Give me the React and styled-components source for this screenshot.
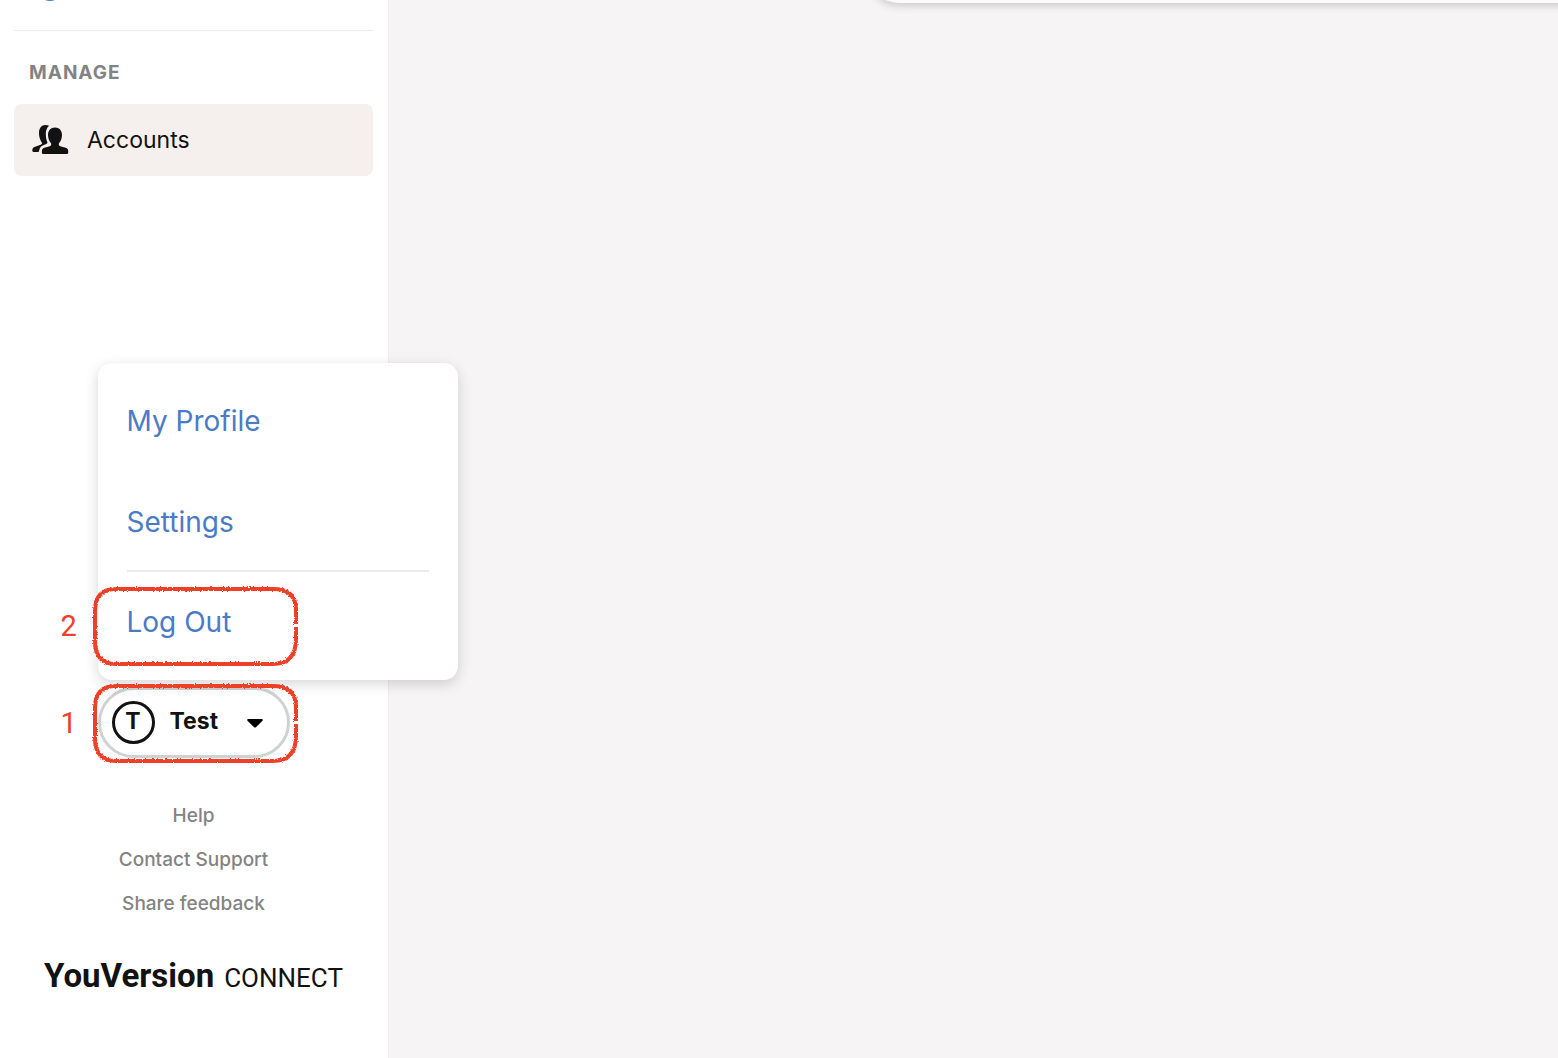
import styled, { createGlobalStyle } from 'styled-components';

import React from 'react';

const GlobalStyle = createGlobalStyle`
    * {
        box-sizing: border-box;
    }
    body {
        margin: 0;
        background-color: #f6f4f5;
        color: #121212;
        font-family: Inter, "Liberation Sans", sans-serif;
    }
`;
const Page = styled.div`
    display: flex;
    min-height: 100vh;
    overflow: hidden;
`;
const Sidebar = styled.aside`
    display: flex;
    flex-flow: column;
    flex: none;
    width: 389px;
    padding: 0 15px 59px 14px;
    border-right: solid 1px #edebec;
    background-color: #ffffff;
`;
const PreviousItem = styled.div`
    height: 72px;
    margin-top: -41px;
    padding: 19px 24px;
    border-bottom: solid 1px #edebeb;
`;
const SectionTitle = styled.h2`
    margin: 30px 15px 19px;
    color: #838383;
    font-size: 19px;
    font-weight: 700;
    line-height: 24px;
    letter-spacing: 1px;
    text-transform: uppercase;
`;
const NavLink = styled.a`
    display: flex;
    align-items: center;
    gap: 18px;
    height: 72px;
    padding: 0 18px;
    border-radius: 8px;
    background-color: #f5efed;
    color: #121212;
    font-size: 23px;
    text-decoration: none;
`;
const Bottom = styled.div`
    display: flex;
    flex-flow: column;
    align-items: center;
    margin-top: auto;
`;
const Account = styled.div`
    position: relative;
`;
const AccountButton = styled.button`
    display: flex;
    align-items: center;
    cursor: pointer;
    width: 192px;
    height: 71px;
    padding: 0 24px 0 11px;
    border: solid 3px #d0d2d1;
    border-radius: 36px;
    background-color: #ffffff;
    color: #121212;
    font: 700 23px/28px Inter, sans-serif;
`;
const Avatar = styled.span`
    width: 43px;
    height: 43px;
    margin-right: 15px;
    border: solid 3px #121212;
    border-radius: 50%;
    line-height: 34px;
    text-align: center;
`;
const UserName = styled.span`
    flex: 1;
    padding-bottom: 4px;
    text-align: left;
`;
const Menu = styled.nav`
    position: absolute;
    bottom: 78px;
    left: 0;
    width: 360px;
    padding: 29px;
    border-radius: 14px;
    background-color: #ffffff;
    box-shadow: 0 4px 14px rgba(0, 0, 0, 0.16);
`;
const MenuLink = styled.a`
    display: block;
    color: #4a7bc4;
    font-size: 28px;
    line-height: 58px;
    text-decoration: none;

    & + & {
        margin-top: 43px;
    }
`;
const Divider = styled.hr`
    height: 2px;
    margin: 19px 0 21px;
    border: none;
    background-color: #ebebeb;
`;
const Callout = styled.div`
    position: absolute;
    bottom: ${props => props.$bottom};
    left: -37px;
    display: flex;
    align-items: center;
    pointer-events: none;
    color: #ee4027;
    font: 29px Roboto, sans-serif;
`;
const CalloutNumber = styled.span`
    width: 31px;
`;
const FooterLinks = styled.div`
    display: flex;
    flex-flow: column;
    align-items: center;
    gap: 20px;
    margin: 46px 0 39px;
`;
const FooterLink = styled.a`
    color: #838383;
    font-size: 19px;
    font-weight: 500;
    line-height: 24px;
    text-decoration: none;
`;
const Brand = styled.div`
    display: flex;
    align-items: baseline;
    gap: 10px;
    font: 700 33px/42px Roboto, sans-serif;
`;
const Product = styled.span`
    font-size: 26px;
    font-weight: 400;
`;
const Content = styled.main`
    flex: 1;
    min-width: 0;
`;
const TopPanel = styled.div`
    height: 80px;
    margin: -77px -40px 0 481px;
    border-radius: 28px;
    background-color: #fcfafb;
    box-shadow: 0 2px 10px rgba(0, 0, 0, 0.2);
`;

function AccountsIcon() {
    return (
        <svg width="37" height="32" viewBox="0 0 37 32" fill="#121212" aria-hidden="true">
            <path d="M23 3.500c4.300 0 7 3.100 7 7.300 0 4.200-1.500 6.800-3 8.500-.5 1.300-.1 2.500 1.200 2.900l5.500 1.500c1.700.5 2.500 1.500 2.500 3.300v1.500c0 1-.6 1.500-1.600 1.500H11.500c-1 0-1.600-.5-1.600-1.500v-1.500c0-1.800.8-2.800 2.500-3.300l5.400-1.500c1.300-.4 1.700-1.600 1.200-2.900-1.500-1.700-3-4.300-3-8.500C16 6.600 18.700 3.500 23 3.500z" />
            <path d="M13.500 1c1.500 0 2.700.2 3.600.8-2.200 1.800-3.300 4.600-3.300 8.300 0 3.100.5 5.700 1.500 8 .4 1-.1 1.500-1 1.900l-3.600 1.500c-1.900.8-3 2.200-3.600 5.200-.2 1-.6 1.400-1.500 1.400H1.800c-1 0-1.500-.6-1.500-1.500 0-2 .7-2.900 2.200-3.500l6.100-2.300c1.500-.6 1.800-1.300 1-2.600C8 15.700 7 12.900 7 9.300 7 4.200 9.300 1 13.500 1z" />
        </svg>
    );
}

function Outline({ id }) {
    return (
        <svg width="207" height="80" viewBox="0 0 207 80" fill="none" stroke="#ee4027" aria-hidden="true">
            <filter id={id}>
                <feTurbulence type="fractalNoise" baseFrequency="0.6" numOctaves="2" seed="4" />
                <feDisplacementMap in="SourceGraphic" scale="3" xChannelSelector="R" yChannelSelector="G" />
            </filter>
            <path
                filter={`url(#${id})`}
                strokeWidth="4"
                d="M204 38V24Q204 3 181 3H24Q3 3 3 25V55Q3 78 24 78H181Q204 78 204 53V41"
            />
            <path
                strokeWidth="2"
                d="M204 38V24Q204 3 181 3H24Q3 3 3 25V55Q3 78 24 78H181Q204 78 204 53V41"
            />
        </svg>
    );
}

export default function App() {
    return (
        <React.Fragment>
            <GlobalStyle />
            <Page>
                <Sidebar>
                    <PreviousItem>
                        <svg width="24" height="24" viewBox="0 0 24 24" aria-hidden="true">
                            <circle cx="12" cy="11" r="12" fill="#4a7bc4" />
                        </svg>
                    </PreviousItem>
                    <SectionTitle>Manage</SectionTitle>
                    <NavLink href="#accounts">
                        <AccountsIcon />
                        Accounts
                    </NavLink>

                    <Bottom>
                        <Account>
                            <AccountButton type="button" aria-expanded="true">
                                <Avatar>T</Avatar>
                                <UserName>Test</UserName>
                                <svg width="16" height="10" viewBox="0 0 16 10" aria-hidden="true">
                                    <path d="M1.200 1H14.800Q16.500 1.400 15.300 3L9.200 9Q8 10 6.800 9L.7 3Q-.5 1.400 1.200 1z" />
                                </svg>
                            </AccountButton>
                            <Menu>
                                <MenuLink href="#profile">My Profile</MenuLink>
                                <MenuLink href="#settings">Settings</MenuLink>
                                <Divider />
                                <MenuLink href="#logout">Log Out</MenuLink>
                            </Menu>
                            <Callout $bottom="92px">
                                <CalloutNumber>2</CalloutNumber>
                                <Outline id="rough-two" />
                            </Callout>
                            <Callout $bottom="-5px">
                                <CalloutNumber>1</CalloutNumber>
                                <Outline id="rough-one" />
                            </Callout>
                        </Account>

                        <FooterLinks>
                            <FooterLink href="#help">Help</FooterLink>
                            <FooterLink href="#support">Contact Support</FooterLink>
                            <FooterLink href="#feedback">Share feedback</FooterLink>
                        </FooterLinks>
                        <Brand>
                            YouVersion
                            <Product>CONNECT</Product>
                        </Brand>
                    </Bottom>
                </Sidebar>
                <Content>
                    <TopPanel />
                </Content>
            </Page>
        </React.Fragment>
    );
}
